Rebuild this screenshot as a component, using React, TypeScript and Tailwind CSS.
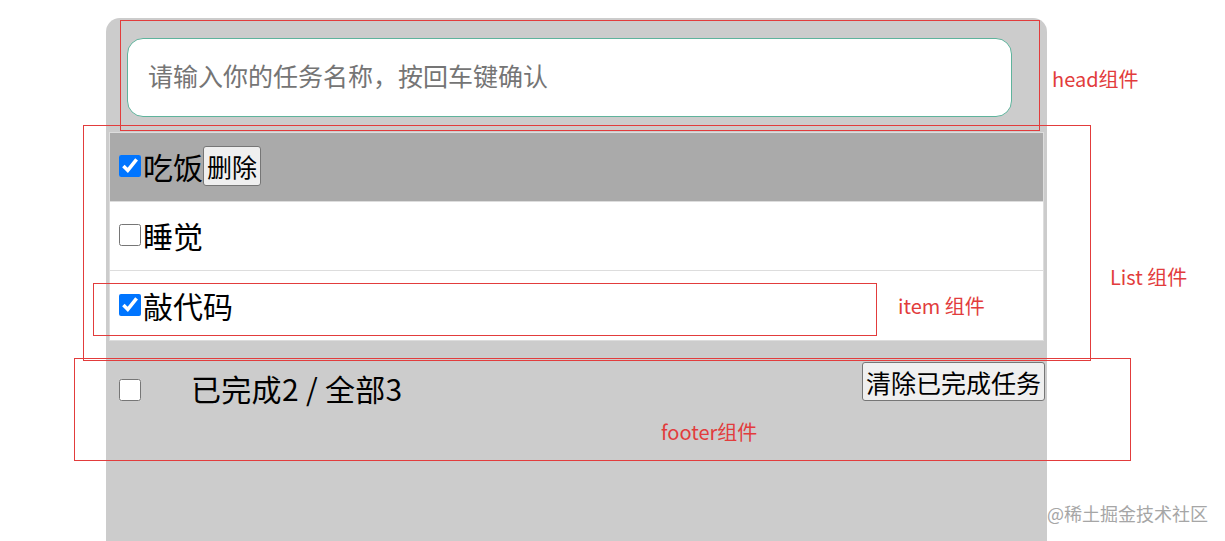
import { useState } from "react";

type Todo = { id: number; name: string; done: boolean };

const font = "font-['Noto_Sans_CJK_SC','Microsoft_YaHei',sans-serif]";

function Header() {
  return (
    <div className="pl-[21px] pt-[20px]">
      <input
        type="text"
        placeholder="请输入你的任务名称，按回车键确认"
        className="h-[79px] w-[885px] rounded-[16px] border border-[#5fb39c] bg-white px-[20px] pb-[5px] text-[25px] text-black outline-none placeholder:text-[#757575]"
      />
    </div>
  );
}

function Item({ todo, hover, last }: { todo: Todo; hover: boolean; last: boolean }) {
  return (
    <li
      className={
        "flex h-[69px] items-center px-[9px] pb-[2px] " +
        (hover ? "bg-[#aaaaaa] " : "bg-white ") +
        (last ? "" : "border-b border-[#dddddd]")
      }
    >
      <input type="checkbox" defaultChecked={todo.done} className="m-0 mr-[2px] h-[22px] w-[22px] accent-[#0075ff]" />
      <span className="text-[30px] leading-[40px] text-black">{todo.name}</span>
      {hover && (
        <button className="h-[40px] rounded-[3px] border border-[#767676] bg-[#efefef] px-[3px] text-[25px] leading-[30px] text-black">
          删除
        </button>
      )}
    </li>
  );
}

function List({ todos }: { todos: Todo[] }) {
  return (
    <ul className="mx-[3px] mt-[15px] border border-[#dddddd] bg-white">
      {todos.map((t, i) => (
        <Item key={t.id} todo={t} hover={i === 0} last={i === todos.length - 1} />
      ))}
    </ul>
  );
}

function Footer({ todos }: { todos: Todo[] }) {
  const done = todos.filter((t) => t.done).length;
  return (
    <div className="flex items-start pl-[13px] pr-[2px] pt-[21px]">
      <input type="checkbox" className="m-0 mt-[17px] h-[22px] w-[22px]" />
      <span className="ml-[50px] mt-[11px] text-[30px] leading-[30px] tracking-[0.3px] text-black">
        已完成{done} / 全部{todos.length}
      </span>
      <button className="ml-auto h-[39px] rounded-[3px] border border-[#767676] bg-[#efefef] px-[3px] text-[25px] leading-[30px] text-black">
        清除已完成任务
      </button>
    </div>
  );
}

export default function App() {
  const [todos] = useState<Todo[]>([
    { id: 1, name: "吃饭", done: true },
    { id: 2, name: "睡觉", done: false },
    { id: 3, name: "敲代码", done: true },
  ]);

  return (
    <div className={"relative h-[541px] w-[1225px] overflow-hidden bg-white " + font}>
      <div className="ml-[106px] mt-[18px] h-[540px] w-[941px] rounded-t-[14px] bg-[#cccccc]">
        <Header />
        <List todos={todos} />
        <Footer todos={todos} />
      </div>

      {/* annotation overlay: red outlines and labels drawn over the screenshot */}
      <div className="absolute left-[120px] top-[20px] h-[111px] w-[920px] border border-[#e23c3c]" />
      <div className="absolute left-[83px] top-[125px] h-[236px] w-[1008px] border border-[#e23c3c]" />
      <div className="absolute left-[93px] top-[283px] h-[53px] w-[784px] border border-[#e23c3c]" />
      <div className="absolute left-[74px] top-[358px] h-[103px] w-[1057px] border border-[#e23c3c]" />

      <span className="absolute left-[1052px] top-[67px] text-[20px] leading-[24px] text-[#e23c3c]">head组件</span>
      <span className="absolute left-[1110px] top-[265px] text-[20px] leading-[24px] text-[#e23c3c]">List 组件</span>
      <span className="absolute left-[898px] top-[294px] text-[20px] leading-[24px] text-[#e23c3c]">item 组件</span>
      <span className="absolute left-[661px] top-[420px] text-[20px] leading-[24px] text-[#e23c3c]">footer组件</span>
      <span className="absolute left-[1047px] top-[502px] text-[18px] leading-[22px] text-[#a6a6a6]">@稀土掘金技术社区</span>
    </div>
  );
}
